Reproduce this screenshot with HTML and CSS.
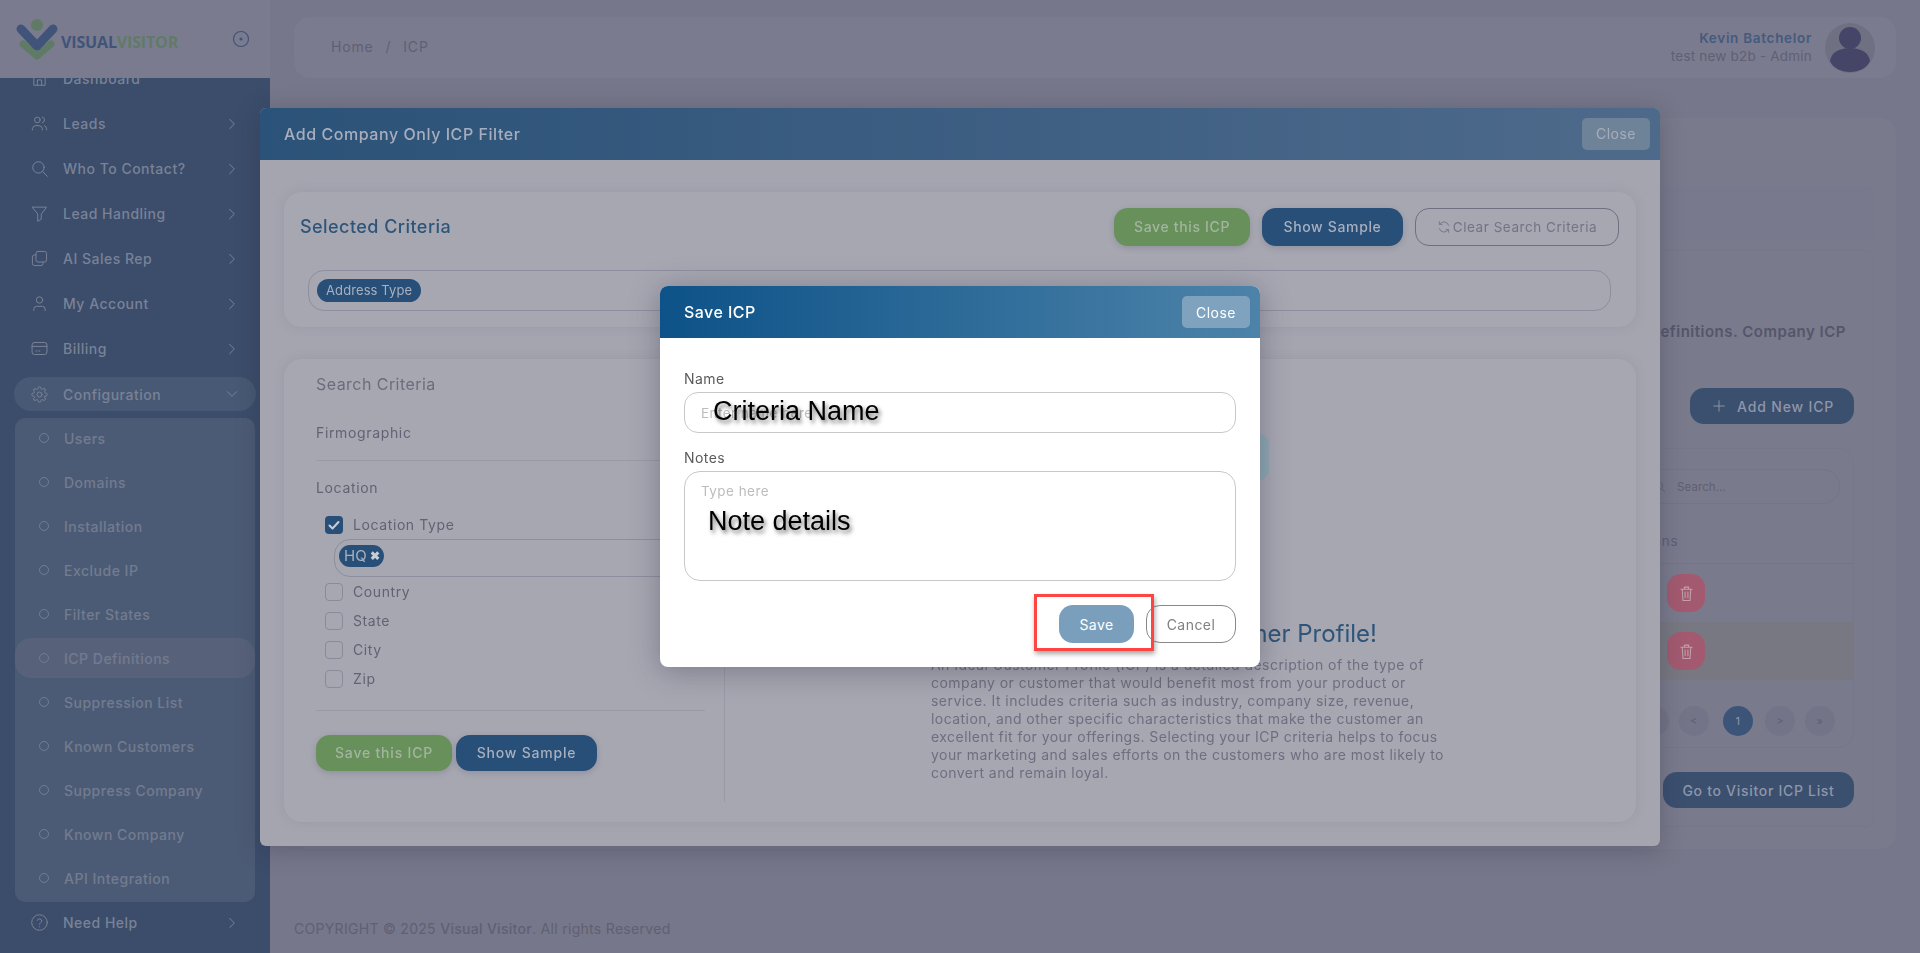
FILE: index.html
```html
<!DOCTYPE html>
<html lang="en">
<head>
  <meta charset="UTF-8">
  <meta name="viewport" content="width=device-width, initial-scale=1.0">
  <title>ICP Definitions</title>
  <link rel="stylesheet" href="styles.css">
</head>
<body>
  <svg class="icon-defs" aria-hidden="true">
    <symbol id="i-home" viewBox="0 0 24 24"><path d="M4 21V10l8-6 8 6v11zM9 21v-7h6v7"/></symbol>
    <symbol id="i-users" viewBox="0 0 24 24"><circle cx="9" cy="7" r="4"/><path d="M2 21v-2a5 5 0 0 1 5-4h4a5 5 0 0 1 5 4v2M16 3.1a4 4 0 0 1 0 7.8M22 21v-2a5 5 0 0 0-3-4"/></symbol>
    <symbol id="i-search" viewBox="0 0 24 24"><circle cx="10.5" cy="10.5" r="8"/><path d="M16.5 16.5L23 23"/></symbol>
    <symbol id="i-filter" viewBox="0 0 24 24"><path d="M2 3h20l-7.5 10v7l-5 3V13z"/></symbol>
    <symbol id="i-copy" viewBox="0 0 24 24"><rect x="7" y="2" width="15" height="15" rx="3"/><path d="M7 7H5a3 3 0 0 0-3 3v9a3 3 0 0 0 3 3h9a3 3 0 0 0 3-3v-2"/></symbol>
    <symbol id="i-user" viewBox="0 0 24 24"><circle cx="12" cy="7" r="4.5"/><path d="M4 22v-2a4 4 0 0 1 4-4h8a4 4 0 0 1 4 4v2"/></symbol>
    <symbol id="i-card" viewBox="0 0 24 24"><rect x="1.500" y="3.500" width="21" height="17" rx="3.500"/><path d="M1.500 9h21M7 15.500h1.500M11 15.500h1.500"/></symbol>
    <symbol id="i-gear" viewBox="0 0 24 24"><circle cx="12" cy="12" r="3.500"/><path d="M19.400 15a1.650 1.650 0 0 0 .33 1.820l.06.06a2 2 0 0 1 0 2.830 2 2 0 0 1-2.830 0l-.06-.06a1.650 1.650 0 0 0-1.820-.33 1.650 1.650 0 0 0-1 1.510V21a2 2 0 0 1-2 2 2 2 0 0 1-2-2v-.09A1.650 1.650 0 0 0 9 19.400a1.650 1.650 0 0 0-1.820.33l-.06.06a2 2 0 0 1-2.830 0 2 2 0 0 1 0-2.830l.06-.06a1.650 1.650 0 0 0 .33-1.820 1.650 1.650 0 0 0-1.510-1H3a2 2 0 0 1-2-2 2 2 0 0 1 2-2h.09A1.650 1.650 0 0 0 4.600 9a1.650 1.650 0 0 0-.33-1.820l-.06-.06a2 2 0 0 1 0-2.830 2 2 0 0 1 2.830 0l.06.06a1.650 1.650 0 0 0 1.820.33H9a1.650 1.650 0 0 0 1-1.510V3a2 2 0 0 1 2-2 2 2 0 0 1 2 2v.09a1.650 1.650 0 0 0 1 1.510 1.650 1.650 0 0 0 1.820-.33l.06-.06a2 2 0 0 1 2.830 0 2 2 0 0 1 0 2.830l-.06.06a1.650 1.650 0 0 0-.33 1.820V9a1.650 1.650 0 0 0 1.510 1H21a2 2 0 0 1 2 2 2 2 0 0 1-2 2h-.09a1.650 1.650 0 0 0-1.510 1z"/></symbol>
    <symbol id="i-help" viewBox="0 0 24 24"><circle cx="12" cy="12" r="11"/><path d="M8.800 9a3.300 3.300 0 0 1 6.400 1c0 2.200-3.200 2.600-3.200 4.500M12 18v.2"/></symbol>
    <symbol id="i-right" viewBox="0 0 24 24"><path d="M8 4l8 8-8 8"/></symbol>
    <symbol id="i-down" viewBox="0 0 24 24"><path d="M4 8l8 8 8-8"/></symbol>
    <symbol id="i-trash" viewBox="0 0 24 24"><path d="M4 6h16M9 6V3h6v3M6 6l1 16h10l1-16M10 10v8M14 10v8"/></symbol>
    <symbol id="i-plus" viewBox="0 0 24 24"><path d="M12 3v18M3 12h18"/></symbol>
    <symbol id="i-refresh" viewBox="0 0 24 24"><path d="M20 9a8.500 8.500 0 0 0-15-2M4 3v4.500h4.500M4 15a8.500 8.500 0 0 0 15 2M20 21v-4.500h-4.500"/></symbol>
  </svg>

  <div class="app">
    <aside class="sidebar">
      <div class="logo-bar">
        <svg class="logo-mark" viewBox="0 0 48 48">
          <path class="logo-green" d="M10 30l14 12 14-12"/>
          <path class="logo-navy" d="M8 15l16 17 16-17"/>
          <circle class="logo-head" cx="24" cy="11" r="6"/>
        </svg>
        <span class="logo-text">VISUAL<span class="logo-text-green">VISITOR</span></span>
        <svg class="logo-toggle" viewBox="0 0 18 18"><circle cx="9" cy="9" r="7.500"/><circle class="logo-toggle-dot" cx="9" cy="9" r="1"/></svg>
      </div>
      <nav class="nav">
        <a class="nav-row"><svg class="nav-icon"><use href="#i-home"/></svg>Dashboard</a>
        <a class="nav-row"><svg class="nav-icon"><use href="#i-users"/></svg>Leads<svg class="nav-arrow"><use href="#i-right"/></svg></a>
        <a class="nav-row"><svg class="nav-icon"><use href="#i-search"/></svg>Who To Contact?<svg class="nav-arrow"><use href="#i-right"/></svg></a>
        <a class="nav-row"><svg class="nav-icon"><use href="#i-filter"/></svg>Lead Handling<svg class="nav-arrow"><use href="#i-right"/></svg></a>
        <a class="nav-row"><svg class="nav-icon"><use href="#i-copy"/></svg>AI Sales Rep<svg class="nav-arrow"><use href="#i-right"/></svg></a>
        <a class="nav-row"><svg class="nav-icon"><use href="#i-user"/></svg>My Account<svg class="nav-arrow"><use href="#i-right"/></svg></a>
        <a class="nav-row"><svg class="nav-icon"><use href="#i-card"/></svg>Billing<svg class="nav-arrow"><use href="#i-right"/></svg></a>
        <a class="nav-row nav-row-open"><svg class="nav-icon"><use href="#i-gear"/></svg>Configuration<svg class="nav-arrow"><use href="#i-down"/></svg></a>
        <div class="subnav">
          <a class="subnav-row">Users</a>
          <a class="subnav-row">Domains</a>
          <a class="subnav-row">Installation</a>
          <a class="subnav-row">Exclude IP</a>
          <a class="subnav-row">Filter States</a>
          <a class="subnav-row subnav-row-active">ICP Definitions</a>
          <a class="subnav-row">Suppression List</a>
          <a class="subnav-row">Known Customers</a>
          <a class="subnav-row">Suppress Company</a>
          <a class="subnav-row">Known Company</a>
          <a class="subnav-row">API Integration</a>
        </div>
        <a class="nav-row"><svg class="nav-icon"><use href="#i-help"/></svg>Need Help<svg class="nav-arrow"><use href="#i-right"/></svg></a>
      </nav>
    </aside>

    <main class="main">
      <header class="topbar">
        <div class="crumbs"><span>Home</span><span>/</span><span>ICP</span></div>
        <div class="account">
          <div class="account-text">
            <div class="account-name">Kevin Batchelor</div>
            <div class="account-role">test new b2b - Admin</div>
          </div>
          <svg class="avatar" viewBox="0 0 50 50">
            <circle class="avatar-bg" cx="25" cy="25" r="25"/>
            <circle class="avatar-fig" cx="25" cy="15" r="11"/>
            <path class="avatar-fig" d="M5 38c1-8 9-13 20-13s19 5 20 13c-3 7-11 11-20 11S8 45 5 38z"/>
          </svg>
        </div>
      </header>

      <section class="page-card">
        <div class="tab-band"></div>
        <div class="panel">
          <p class="panel-text">Manage your ICP Definitions. Company ICP</p>
          <div class="panel-action">
            <button class="btn btn-page btn-add"><svg class="btn-add-icon"><use href="#i-plus"/></svg>Add New ICP</button>
          </div>
          <div class="table-card">
            <div class="table-search">
              <div class="search-box"><svg class="search-icon"><use href="#i-search"/></svg>Search...</div>
            </div>
            <div class="table-head">Actions</div>
            <div class="table-row"><button class="btn-trash"><svg><use href="#i-trash"/></svg></button></div>
            <div class="table-row table-row-alt"><button class="btn-trash"><svg><use href="#i-trash"/></svg></button></div>
            <div class="pager">
              <span class="pager-item pager-end">«</span>
              <span class="pager-item">&lt;</span>
              <span class="pager-item pager-current">1</span>
              <span class="pager-item">&gt;</span>
              <span class="pager-item pager-end">»</span>
            </div>
          </div>
          <div class="panel-action panel-action-bottom">
            <button class="btn btn-page btn-visitor">Go to Visitor ICP List</button>
          </div>
        </div>
      </section>

      <footer class="copyright">COPYRIGHT © 2025 <b>Visual Visitor</b>. All rights Reserved</footer>
    </main>
  </div>

  
  <div class="backdrop">
    <div class="filter-modal">
      <div class="filter-head">
        <h2>Add Company Only ICP Filter</h2>
        <button class="btn-close btn-close-dim">Close</button>
      </div>
      <div class="filter-body">
        <section class="crit-card">
          <div class="crit-top">
            <h3>Selected Criteria</h3>
            <div class="crit-btns">
              <button class="btn btn-green">Save this ICP</button>
              <button class="btn btn-navy">Show Sample</button>
              <button class="btn btn-clear"><svg><use href="#i-refresh"/></svg>Clear Search Criteria</button>
            </div>
          </div>
          <div class="crit-input"><span class="chip">Address Type</span></div>
        </section>

        <section class="search-card">
          <div class="search-col">
            <div class="search-title">Search Criteria</div>
            <div class="group-title group-first">Firmographic</div>
            <hr class="group-line">
            <div class="group-title">Location</div>
            <label class="check-row check-first"><span class="check check-on"><svg viewBox="0 0 18 18"><path d="M4.500 9.500l3 3 6-6.500"/></svg></span>Location Type</label>
            <div class="tag-input"><span class="chip chip-tag">HQ<b>✖</b></span></div>
            <label class="check-row check-after-tag"><span class="check"></span>Country</label>
            <label class="check-row"><span class="check"></span>State</label>
            <label class="check-row"><span class="check"></span>City</label>
            <label class="check-row"><span class="check"></span>Zip</label>
            <hr class="group-line group-line-end">
            <div class="search-btns">
              <button class="btn btn-green btn-short">Save this ICP</button>
              <button class="btn btn-navy btn-short btn-wide">Show Sample</button>
            </div>
          </div>
          <div class="intro-col">
            <div class="intro-art"></div>
            <h4>Build Your Ideal Customer Profile!</h4>
            <p>An Ideal Customer Profile (ICP) is a detailed description of the type of company or customer that would benefit most from your product or service. It includes criteria such as industry, company size, revenue, location, and other specific characteristics that make the customer an excellent fit for your offerings. Selecting your ICP criteria helps to focus your marketing and sales efforts on the customers who are most likely to convert and remain loyal.</p>
          </div>
        </section>
      </div>
    </div>
  </div>

  <!-- save modal -->
  <div class="backdrop">
    <div class="save-modal">
      <div class="save-head">
        <h2>Save ICP</h2>
        <button class="btn-close">Close</button>
      </div>
      <form class="save-body">
        <label class="field-label" for="icpName">Name</label>
        <div class="field-wrap">
          <input class="field-input" id="icpName" placeholder="Enter name here">
          <span class="note-text note-name">Criteria Name</span>
        </div>
        <label class="field-label field-label-notes" for="icpNotes">Notes</label>
        <div class="field-wrap">
          <textarea class="field-area" id="icpNotes" placeholder="Type here"></textarea>
          <span class="note-text note-details">Note details</span>
        </div>
        <div class="save-actions">
          <div class="save-btn-wrap">
            <button type="button" class="btn-save">Save</button>
            <span class="red-box"></span>
          </div>
          <button type="button" class="btn-cancel">Cancel</button>
        </div>
      </form>
    </div>
  </div>
</body>
</html>
```

FILE: styles.css
```css
* {
  box-sizing: border-box;
}
html, body {
  height: 100%;
}
body {
  margin: 0;
  overflow: hidden;
  font-family: Inter, "Noto Sans", sans-serif;
  font-size: 14px;
  letter-spacing: 0.45px;
  color: #5e6073;
  background-color: #76778a;
}
button, input, textarea {
  font: inherit;
  letter-spacing: inherit;
}
h2, h3, h4, p {
  margin: 0;
}
.icon-defs {
  display: none;
}
svg {
  fill: none;
  stroke: currentColor;
  stroke-linecap: round;
  stroke-linejoin: round;
}
.btn {
  padding: 0;
  cursor: pointer;
  font-weight: 500;
  letter-spacing: 0.65px;
}

.app {
  display: flex;
  height: 953px;
}

/* sidebar */
.sidebar {
  width: 270px;
  flex-shrink: 0;
  background-color: #3b4d6b;
  overflow: hidden;
}
.logo-bar {
  position: relative;
  z-index: 1;
  display: flex;
  align-items: center;
  height: 78px;
  padding: 0 20px 0 13px;
  background-color: #7b7b8f;
}
.logo-mark {
  width: 48px;
  height: 48px;
  margin-top: -2px;
}
.logo-navy {
  stroke: #3f5478;
  stroke-width: 9;
}
.logo-green {
  stroke: #5f7b66;
  stroke-width: 7;
}
.logo-head {
  fill: #5f7b66;
  stroke: none;
}
.logo-text {
  flex: 1;
  margin: 5px 0 0 0;
  font-family: "Open Sans", sans-serif;
  font-size: 16px;
  font-weight: 700;
  letter-spacing: -0.15px;
  color: #3f5478;
}
.logo-text-green {
  color: #5f7b66;
}
.logo-toggle {
  width: 18px;
  height: 18px;
  color: #3f5478;
  stroke-width: 1.2;
}
.logo-toggle-dot {
  fill: #3f5478;
}
.nav {
  margin-top: -22px;
}
.nav-row {
  display: flex;
  align-items: center;
  height: 45px;
  padding: 0 31px;
  font-weight: 500;
  letter-spacing: 0.5px;
  color: #7a8296;
}
.nav-row-open {
  height: 34px;
  margin: 6px 14px 7px;
  padding: 0 17px;
  border-radius: 17px;
  background-color: #475974;
}
.nav-icon {
  width: 17px;
  height: 17px;
  margin-right: 15px;
  stroke-width: 1.4;
}
.nav-arrow {
  width: 14px;
  height: 14px;
  margin-left: auto;
  stroke-width: 1.7;
}
.subnav {
  display: flow-root;
  width: 240px;
  margin: 0 0 -2px 15px;
  padding-bottom: 2px;
  border-radius: 10px;
  background-color: #4c5b75;
}
.subnav-row {
  display: flex;
  align-items: center;
  height: 44px;
  padding-left: 48px;
  letter-spacing: 0.5px;
  color: #737b8f;
  font-weight: 500;
}
.subnav-row:first-child {
  margin-top: -2px;
}
.subnav-row::before {
  content: "";
  width: 8px;
  height: 8px;
  margin: 0 15px 0 -24px;
  border: 1px solid #737b8f;
  border-radius: 50%;
}
.subnav-row-active {
  height: 40px;
  margin: 2px 0;
  border-radius: 16px;
  background-color: #57627a;
}

/* page behind the modals */
.main {
  flex: 1;
  min-width: 0;
  padding: 17px 24px 0;
}
.topbar {
  display: flex;
  align-items: center;
  justify-content: space-between;
  height: 61px;
  padding: 0 21px 0 37px;
  border-radius: 16px;
  background-color: #7b7b8f;
}
.crumbs {
  display: flex;
  gap: 12px;
  margin-top: -2px;
  letter-spacing: 0.8px;
  color: #5f6073;
}
.account {
  display: flex;
  align-items: center;
  gap: 13px;
}
.account-text {
  margin-top: -2px;
  text-align: right;
  line-height: 18px;
  font-size: 13.500px;
}
.account-name {
  font-weight: 600;
  letter-spacing: 0.7px;
  color: #445a7d;
}
.account-role {
  letter-spacing: 0.2px;
}
.avatar {
  width: 50px;
  height: 50px;
  stroke: none;
}
.avatar-bg {
  fill: #6f7082;
}
.avatar-fig {
  fill: #454568;
}
.page-card {
  height: 731px;
  margin-top: 40px;
  padding: 68px 22px 0;
  border-radius: 16px;
  background-color: #7a7a8d;
}
.tab-band {
  height: 54px;
  border-radius: 6px;
  background-color: #78798c;
}
.panel {
  height: 577px;
  margin-top: 10px;
  padding: 71px 19px 0;
  border: 1px solid #76778b;
  border-radius: 8px;
}
.panel-text {
  padding-right: 8px;
  text-align: right;
  line-height: 20px;
  font-size: 15px;
  font-weight: 600;
  letter-spacing: 0.5px;
  color: #555669;
}
.panel-action {
  display: flex;
  justify-content: flex-end;
  margin-top: 46px;
}
.panel-action-bottom {
  margin-top: 24px;
}
.btn-page {
  height: 36px;
  border: none;
  border-radius: 14px;
  background-color: #3b4f6f;
  color: #8f96a8;
  letter-spacing: 0.7px;
}
.btn-add {
  display: flex;
  align-items: center;
  gap: 11px;
  width: 164px;
  padding: 0 0 0 22px;
  letter-spacing: 0.85px;
}
.btn-add-icon {
  width: 14px;
  height: 14px;
  stroke-width: 1.600;
}
.btn-visitor {
  width: 191px;
}
.table-card {
  height: 300px;
  margin-top: 24px;
  border: 1px solid #76778b;
  border-radius: 16px;
}
.table-search {
  display: flex;
  justify-content: flex-end;
  padding: 20px 13px 0;
}
.search-box {
  display: flex;
  align-items: center;
  gap: 12px;
  width: 200px;
  height: 35px;
  padding-left: 13px;
  border: 1px solid #74758a;
  border-radius: 18px;
  font-size: 11.500px;
  letter-spacing: 0.1px;
  color: #5f6073;
}
.search-icon {
  width: 11px;
  height: 11px;
  stroke-width: 2;
}
.table-head {
  height: 60px;
  padding: 27px 175px 0 0;
  border-bottom: 1px solid #74758a;
  text-align: right;
  line-height: 20px;
}
.table-row {
  display: flex;
  justify-content: flex-end;
  align-items: center;
  height: 58px;
  padding-right: 148px;
}
.table-row-alt {
  background-color: #787882;
}
.btn-trash {
  display: flex;
  align-items: center;
  justify-content: center;
  width: 38px;
  height: 38px;
  padding: 0;
  border: none;
  border-radius: 14px;
  background-color: #a35a70;
  color: #c2a0ad;
}
.btn-trash svg {
  width: 17px;
  height: 17px;
  stroke-width: 1.500;
}
.pager {
  display: flex;
  justify-content: flex-end;
  align-items: center;
  gap: 14px;
  margin-top: 26px;
  padding-right: 18px;
}
.pager-item {
  display: flex;
  align-items: center;
  justify-content: center;
  width: 30px;
  height: 30px;
  border-radius: 50%;
  background-color: #737487;
  font-size: 11px;
}
.pager-end:first-child {
  margin-right: -4px;
}
.pager-end:last-child {
  margin-left: -4px;
}
.pager-current {
  margin-right: -2px;
  background-color: #3b5478;
  color: #8f96a8;
}
.copyright {
  margin-top: 70px;
  line-height: 20px;
  letter-spacing: 0.3px;
  color: #5f6073;
}
.copyright b {
  font-weight: 500;
}

/* modals */
.backdrop {
  position: fixed;
  top: 0;
  right: 0;
  bottom: 0;
  left: 0;
  display: flex;
  align-items: center;
  justify-content: center;
}
.filter-modal {
  width: 1400px;
  height: 738px;
  overflow: hidden;
  border-radius: 6px;
  background-color: #a5a5b0;
  box-shadow: 0 4px 24px rgba(40, 40, 60, 0.3);
}
.filter-head {
  display: flex;
  align-items: center;
  justify-content: space-between;
  height: 52px;
  padding: 0 10px 0 24px;
  background: linear-gradient(90deg, #2b5278, #4e6a8b);
}
.filter-head h2 {
  font-size: 16px;
  font-weight: 500;
  letter-spacing: 0.55px;
  color: #a8aebd;
}
.btn-close {
  width: 68px;
  height: 32px;
  padding: 0;
  border: none;
  border-radius: 5px;
  background-color: #7fa3bf;
  color: #fff;
}
.btn-close-dim {
  background-color: #6f8398;
  color: #a6adba;
}
.filter-body {
  padding: 32px 24px 24px;
}
.crit-card {
  height: 135px;
  padding: 16px 17px 16px 16px;
  border-radius: 18px;
  background-color: #a7a7b2;
  box-shadow: 0 0 12px rgba(80, 80, 100, 0.12);
}
.crit-top {
  display: flex;
  align-items: center;
  justify-content: space-between;
}
.crit-top h3 {
  font-size: 18px;
  font-weight: 500;
  color: #2e5579;
}
.crit-btns {
  display: flex;
  gap: 12px;
}
.btn-green, .btn-navy, .btn-clear {
  width: 136px;
  height: 38px;
  border: none;
  border-radius: 14px;
  box-shadow: 0 2px 6px rgba(60, 60, 80, 0.2);
}
.btn-green {
  background-color: #67905a;
  color: #a3b5a0;
}
.btn-navy {
  width: 141px;
  background-color: #284f78;
  color: #a8b0bf;
}
.btn-clear {
  display: flex;
  align-items: center;
  justify-content: center;
  width: 204px;
  border: 1px solid #6f6f80;
  background: none;
  box-shadow: none;
  color: #737385;
  font-weight: 400;
  font-size: 13.500px;
  letter-spacing: 0.55px;
}
.btn-clear svg {
  width: 14px;
  height: 14px;
  margin-right: 2px;
  stroke-width: 1.600;
}
.crit-input {
  display: flex;
  align-items: center;
  height: 41px;
  margin: 24px 8px 0;
  padding-left: 8px;
  border: 1px solid #8e8e9e;
  border-radius: 16px;
}
.chip {
  display: inline-flex;
  align-items: center;
  height: 23px;
  padding: 0 9px;
  border-radius: 12px;
  background-color: #284f78;
  color: #a8b0bf;
  font-size: 13px;
  letter-spacing: 0.1px;
}
.chip-tag {
  height: 22px;
  padding: 0 4px 0 5px;
  font-size: 15px;
  letter-spacing: 0;
}
.chip-tag b {
  margin-left: 3px;
  font-size: 12px;
  color: #c8ced8;
}
.search-card {
  display: flex;
  height: 463px;
  margin-top: 32px;
  border-radius: 18px;
  background-color: #a7a7b2;
  box-shadow: 0 0 12px rgba(80, 80, 100, 0.12);
}
.search-col {
  width: 441px;
  margin-bottom: 20px;
  padding: 15px 19px 0 32px;
  border-right: 1px solid #9a9aa6;
}
.search-title {
  line-height: 20px;
  font-size: 16px;
  color: #6c6c7c;
}
.group-title {
  line-height: 20px;
  letter-spacing: 0.65px;
  color: #626274;
}
.group-first {
  margin-top: 29px;
}
.group-line {
  height: 1px;
  margin: 17px 0;
  border: 0;
  background-color: #9a9aa6;
}
.group-line-end {
  margin: 22px 0 24px;
}
.check-row {
  display: flex;
  align-items: center;
  gap: 10px;
  height: 18px;
  margin: 11px 0 0 9px;
  letter-spacing: 0.6px;
  color: #626274;
}
.check-first {
  margin-top: 18px;
}
.check-after-tag {
  margin-top: 6px;
}
.check {
  width: 18px;
  height: 18px;
  border: 1px solid #8a8a9a;
  border-radius: 4px;
}
.check-on {
  border: none;
  background-color: #284f78;
  color: #c8ced8;
}
.check-on svg {
  display: block;
  stroke-width: 2;
}
.tag-input {
  display: flex;
  align-items: flex-start;
  height: 38px;
  margin: 5px 0 0 18px;
  padding: 5px 0 0 4px;
  border: 1px solid #8e8e9e;
  border-radius: 16px 0 0 16px;
}
.search-btns {
  display: flex;
  gap: 4px;
}
.btn-short {
  height: 36px;
  letter-spacing: 0.8px;
}
.intro-col {
  flex: 1;
  padding: 74px 0 0 206px;
}
.intro-art {
  width: 344px;
  height: 48px;
  margin-left: -6px;
  border-radius: 12px;
  background-color: #8fa9b3;
}
.intro-col h4 {
  width: 446px;
  margin-top: 138px;
  text-align: right;
  line-height: 30px;
  font-size: 24px;
  font-weight: 400;
  letter-spacing: 0;
  color: #2e5579;
}
.intro-col p {
  width: 522px;
  margin-top: 7px;
  line-height: 18px;
  font-size: 14px;
  letter-spacing: 0.45px;
  color: #6e6e80;
}

.save-modal {
  width: 600px;
  height: 381px;
  overflow: hidden;
  border-radius: 8px;
  background-color: #fff;
  box-shadow: 0 4px 30px rgba(40, 40, 60, 0.35);
}
.save-head {
  display: flex;
  align-items: center;
  justify-content: space-between;
  height: 52px;
  padding: 0 10px 0 24px;
  background: linear-gradient(90deg, #0d5288, #4d83a9);
}
.save-head h2 {
  font-size: 16px;
  font-weight: 500;
  color: #fff;
}
.save-body {
  padding: 32px 24px 0;
}
.field-label {
  display: block;
  height: 22px;
  line-height: 18px;
  font-size: 14px;
  color: #5a5a5a;
}
.field-label-notes {
  margin-top: 16px;
}
.field-wrap {
  position: relative;
}
.field-input, .field-area {
  display: block;
  width: 552px;
  border: 1px solid #c8c8c8;
  outline: none;
  color: #444;
  font-size: 13.500px;
}
.field-input {
  height: 41px;
  padding: 0 16px;
  border-radius: 14px;
}
.field-area {
  height: 110px;
  padding: 11px 16px;
  border-radius: 16px;
  resize: none;
}
.field-input::placeholder, .field-area::placeholder {
  color: #bdbdbd;
}
.note-text {
  position: absolute;
  font-family: "Liberation Sans", Arial, sans-serif;
  font-size: 27px;
  letter-spacing: 0;
  line-height: 32px;
  color: #000;
  text-shadow: 2px 3px 4px rgba(0, 0, 0, 0.55);
}
.note-name {
  top: 3px;
  left: 29px;
}
.note-details {
  top: 34px;
  left: 24px;
}
.save-actions {
  display: flex;
  justify-content: flex-end;
  gap: 12px;
  margin-top: 24px;
}
.save-btn-wrap {
  position: relative;
}
.btn-save, .btn-cancel {
  display: block;
  height: 38px;
  padding: 0;
  border-radius: 14px;
}
.btn-save {
  width: 75px;
  border: none;
  background-color: #7a9fbd;
  color: #fff;
}
.btn-cancel {
  width: 90px;
  border: 1px solid #888;
  background-color: #fff;
  color: #808080;
}
.red-box {
  position: absolute;
  top: -11px;
  left: -25px;
  width: 120px;
  height: 57px;
  border: 3px solid #f44;
  box-shadow: 1px 3px 5px rgba(0, 0, 0, 0.35);
  pointer-events: none;
}
```
